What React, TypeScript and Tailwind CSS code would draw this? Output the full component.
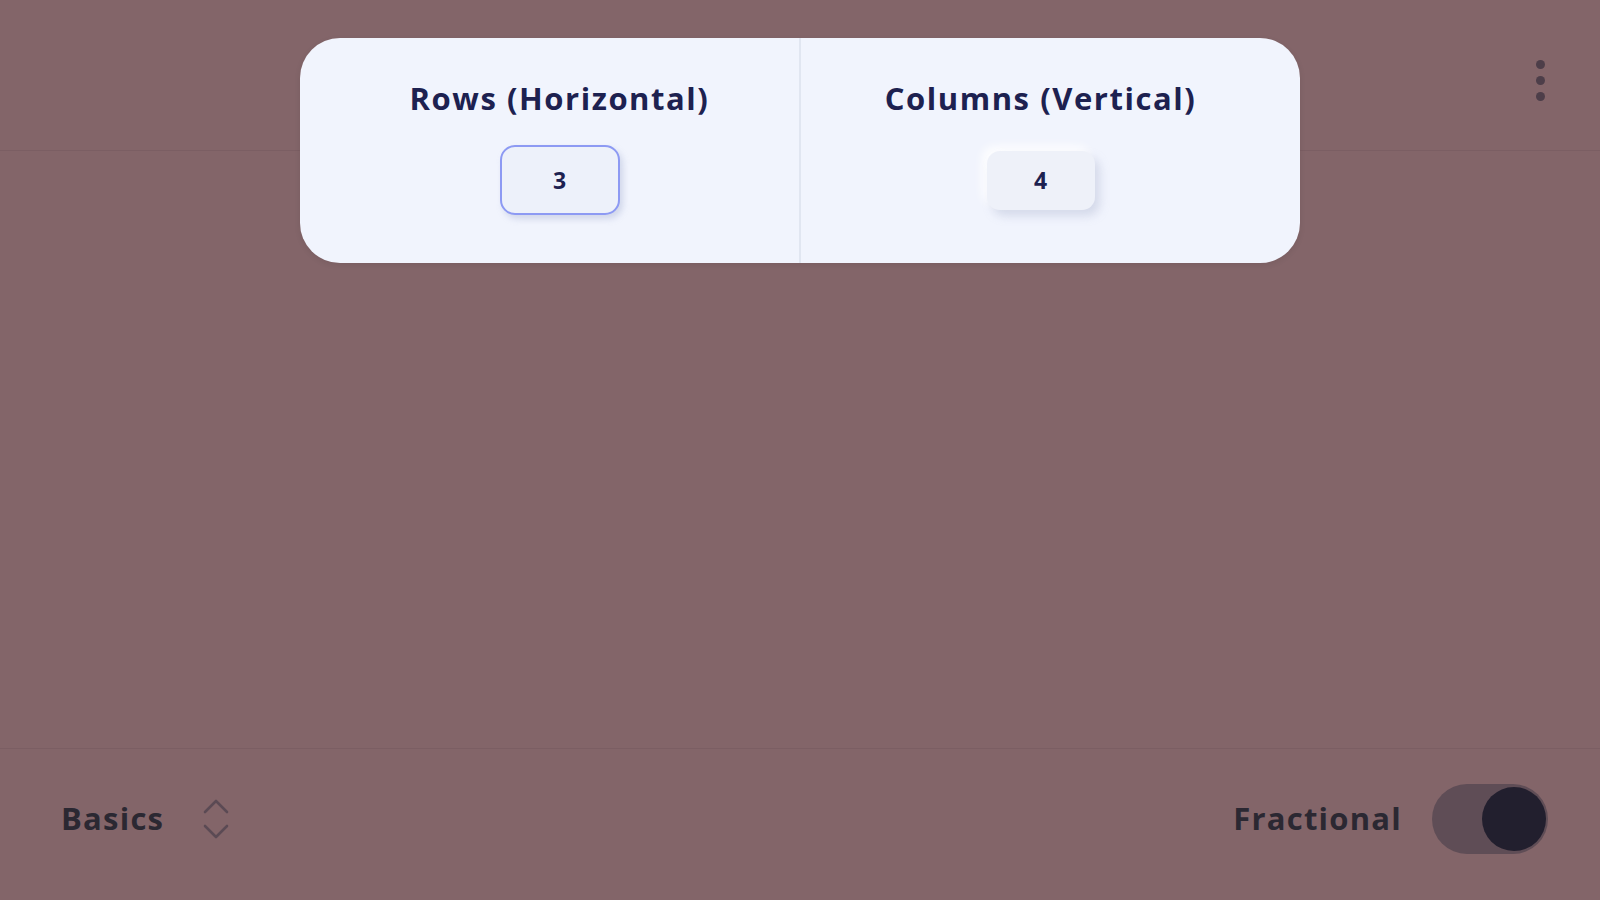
import { useState } from 'react'

const font = { fontFamily: '"Open Sans", "Noto Sans", sans-serif' }

function Counter({ label, value, focused }: { label: string; value: number; focused?: boolean }) {
  return (
    <div className="flex-1 flex flex-col items-center pt-[40px]">
      <div className="text-[31px] font-bold text-[#1d2150] tracking-[0.05em] leading-[40px]">{label}</div>
      <div className="h-[84px] mt-[27px] flex items-start justify-center">
        {focused ? (
          <div className="w-[120px] h-[70px] rounded-[15px] bg-[#edf1fa] border-2 border-[#8d9af3] shadow-[3px_4px_6px_rgba(150,160,200,0.35)] flex items-center justify-center text-[23px] font-bold text-[#1d2150]">
            {value}
          </div>
        ) : (
          <div className="mt-[6px] w-[108px] h-[59px] rounded-[13px] bg-[#eef1f9] shadow-[5px_6px_10px_rgba(160,170,200,0.35),-5px_-5px_10px_rgba(255,255,255,0.9)] flex items-center justify-center text-[23px] font-bold text-[#1d2150]">
            {value}
          </div>
        )}
      </div>
    </div>
  )
}

export default function App() {
  const [on] = useState(true)

  return (
    <div className="relative w-[1600px] h-[900px] bg-[#836569] flex flex-col overflow-hidden" style={font}>
      {/* Header */}
      <div className="h-[151px] border-b border-[#7b5e63] flex justify-end pr-[55px] pt-[60px]">
        <div className="flex flex-col gap-[7px]">
          <span className="w-[9px] h-[9px] rounded-full bg-[#4d3e49]" />
          <span className="w-[9px] h-[9px] rounded-full bg-[#4d3e49]" />
          <span className="w-[9px] h-[9px] rounded-full bg-[#4d3e49]" />
        </div>
      </div>

      <div className="flex-1" />

      {/* Footer */}
      <div className="h-[152px] border-t border-[#7b5e63] flex items-center justify-between pl-[61px] pr-[52px] pb-[12px]">
        <div className="flex items-center gap-[36px]">
          <span className="text-[31px] font-bold text-[#2b2832] tracking-[0.04em]">Basics</span>
          <svg width="32" height="46" viewBox="0 0 32 46" fill="none" stroke="#5b4a54" strokeWidth="2.6" strokeLinecap="round" strokeLinejoin="round">
            <path d="M5 16 L16 5 L27 16" />
            <path d="M5 30 L16 41 L27 30" />
          </svg>
        </div>
        <div className="flex items-center gap-[30px]">
          <span className="text-[31px] font-bold text-[#2b2832] tracking-[0.04em]">Fractional</span>
          <div className="w-[116px] h-[70px] rounded-full bg-[#5f4d56] flex items-center justify-end pr-[2px]">
            {on && <span className="w-[64px] h-[64px] rounded-full bg-[#221f2e]" />}
          </div>
        </div>
      </div>

      {/* Popover */}
      <div className="absolute left-[300px] top-[38px] w-[1000px] h-[225px] rounded-[40px] bg-[#f1f4fd] flex px-[20px] shadow-[0_2px_6px_rgba(0,0,0,0.08)]">
        <Counter label="Rows (Horizontal)" value={3} focused />
        <div className="w-[2px] bg-[#e1e6f1]" />
        <Counter label="Columns (Vertical)" value={4} />
      </div>
    </div>
  )
}
